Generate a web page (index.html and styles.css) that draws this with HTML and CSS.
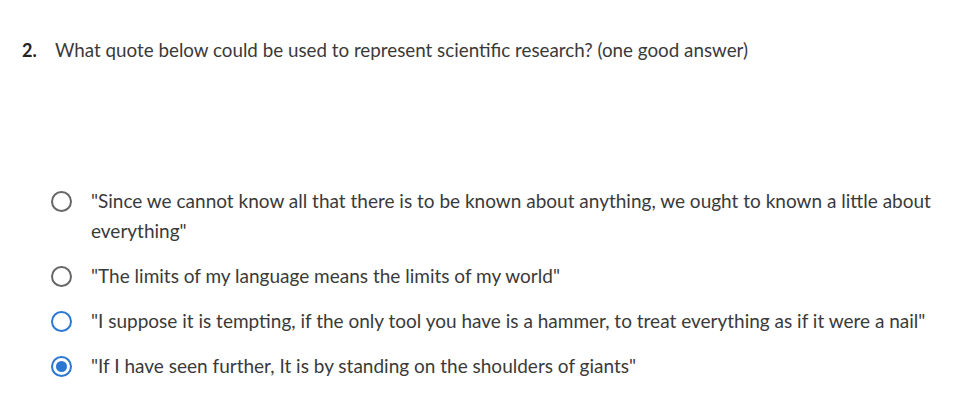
FILE: index.html
```html
<!DOCTYPE html>
<html>
<head>
<meta charset="utf-8">
<link rel="stylesheet" href="styles.css">
</head>
<body>
<div class="question">
  <div class="q-head">
    <span class="q-num">2.</span>
    <span class="q-text">What quote below could be used to represent scientific research? (one good answer)</span>
  </div>
  <ul class="options">
    <li class="option">
      <span class="radio"></span>
      <span class="label">"Since we cannot know all that there is to be known about anything, we ought to known a little about everything"</span>
    </li>
    <li class="option">
      <span class="radio"></span>
      <span class="label">"The limits of my language means the limits of my world"</span>
    </li>
    <li class="option">
      <span class="radio hover"></span>
      <span class="label">"I suppose it is tempting, if the only tool you have is a hammer, to treat everything as if it were a nail"</span>
    </li>
    <li class="option">
      <span class="radio checked"></span>
      <span class="label">"If I have seen further, It is by standing on the shoulders of giants"</span>
    </li>
  </ul>
</div>
</body>
</html>
```
FILE: styles.css
```css
html, body {
  margin: 0;
  padding: 0;
  background: #ffffff;
}
body {
  font-family: Lato, "Open Sans", sans-serif;
  color: #333333;
}
.question {
  padding: 38px 0 0 22px;
}
.q-head {
  display: flex;
  align-items: baseline;
  font-size: 18.8px;
  line-height: 24px;
}
.q-num {
  width: 33px;
  font-weight: 700;
  font-size: 18px;
  color: #222222;
}
.q-text {
  color: #3a3a3a;
}
.options {
  list-style: none;
  margin: 124px 0 0 0;
  padding: 0 0 0 30px;
  display: flex;
  flex-direction: column;
  gap: 15px;
}
.option {
  display: flex;
  align-items: flex-start;
  gap: 19px;
  font-size: 19px;
  line-height: 30px;
  color: #3a3a3a;
}
.radio {
  flex: none;
  box-sizing: border-box;
  width: 21px;
  height: 21px;
  margin-top: 5px;
  margin-left: -1px;
  border: 2px solid #666666;
  border-radius: 50%;
  display: flex;
  align-items: center;
  justify-content: center;
}
.radio.hover, .radio.checked {
  border-color: #2a77d4;
}
.radio.checked::after {
  content: "";
  width: 11px;
  height: 11px;
  border-radius: 50%;
  background: #2a77d4;
}
.label {
  max-width: 850px;
}
```
